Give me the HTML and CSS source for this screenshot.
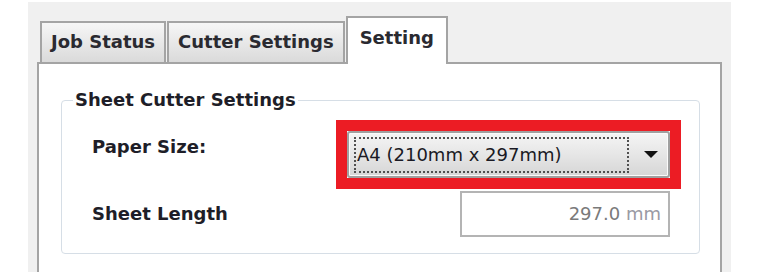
FILE: index.html
```html
<!DOCTYPE html>
<html>
<head>
<meta charset="utf-8">
<link rel="stylesheet" href="styles.css">
</head>
<body>
<div class="window">
  <div class="tabs">
    <div class="tab">Job Status</div>
    <div class="tab">Cutter Settings</div>
    <div class="tab active">Setting</div>
  </div>
  <div class="panel">
    <fieldset class="group">
      <legend class="group-title">Sheet Cutter Settings</legend>
      <div class="form">
        <div class="label label-top">Paper Size:</div>
        <div class="combo">
          <span class="combo-focus">A4 (210mm x 297mm)</span>
          <span class="combo-arrow"></span>
        </div>
        <div class="label">Sheet Length</div>
        <div class="textbox"><span class="num">297.0</span>&nbsp;<span class="unit">mm</span></div>
      </div>
    </fieldset>
  </div>
</div>
</body>
</html>
```

FILE: styles.css
```css
html, body {
  margin: 0;
  padding: 0;
  background: #ffffff;
}
body {
  font-family: "DejaVu Sans", "Liberation Sans", sans-serif;
  font-size: 18px;
  line-height: 22px;
  color: #1e1e28;
}
.window {
  margin: 2px 0 0 28px;
  width: 703px;
  height: 270px;
  background: #f0f0f0;
  padding: 14px 0 0 9px;
  box-sizing: border-box;
}
.tabs {
  display: flex;
  align-items: flex-end;
  height: 46px;
  padding-left: 3px;
  gap: 1px;
}
.tab {
  height: 41px;
  box-sizing: border-box;
  border: 2px solid #a4a4a4;
  border-bottom: none;
  background: linear-gradient(#f6f6f6, #dadada);
  padding: 8px 9px 0 9px;
  font-weight: bold;
  color: #2a2a30;
}
.tab.active {
  height: 48px;
  margin-bottom: -2px;
  margin-left: 0;
  background: #ffffff;
  padding: 9px 12px 0 12px;
  position: relative;
  z-index: 1;
}
.panel {
  width: 685px;
  height: 220px;
  box-sizing: border-box;
  background: #ffffff;
  border: 2px solid #a4a4a4;
  border-bottom: none;
  padding: 26px 20px 0 22px;
}
.group {
  margin: 0;
  border: 1px solid #d6dee6;
  border-radius: 4px;
  padding: 0 29px 16px 11px;
  height: 164px;
  box-sizing: border-box;
}
.group-title {
  font-weight: bold;
  padding: 0 2px;
  line-height: 20px;
}
.form {
  display: grid;
  grid-template-columns: 1fr auto;
  row-gap: 13px;
  padding-top: 21px;
  padding-left: 19px;
}
.label {
  font-weight: bold;
  align-self: center;
  color: #1e1e28;
}
.label-top {
  align-self: start;
  margin-top: 5px;
}
.combo {
  position: relative;
  width: 323px;
  height: 47px;
  box-sizing: border-box;
  border: 2px solid #a0a0a0;
  border-radius: 3px;
  background: linear-gradient(#f5f5f5, #e6e6e6 50%, #d6d6d6);
  box-shadow: inset 0 0 0 1px #fbfbfb;
  display: flex;
  align-items: center;
  padding: 0 7px 0 5px;
  justify-self: end;
}
.combo::after {
  content: "";
  position: absolute;
  inset: -13px;
  border: 11px solid #ec1c24;
  pointer-events: none;
}
.combo-focus {
  flex: 1;
  height: 36px;
  box-sizing: border-box;
  border: 2px dotted #505050;
  display: flex;
  align-items: center;
  color: #1a1a24;
  padding-left: 1px;
}
.combo-arrow {
  width: 0;
  height: 0;
  margin-left: 15px;
  margin-right: 3px;
  border-left: 7px solid transparent;
  border-right: 7px solid transparent;
  border-top: 7px solid #111111;
}
.textbox {
  width: 210px;
  height: 46px;
  box-sizing: border-box;
  border: 2px solid #b4b4b4;
  background: #ffffff;
  justify-self: end;
  display: flex;
  align-items: center;
  justify-content: flex-end;
  padding-right: 7px;
}
.num {
  color: #7a7a7a;
}
.unit {
  color: #9a9aa4;
}
```
